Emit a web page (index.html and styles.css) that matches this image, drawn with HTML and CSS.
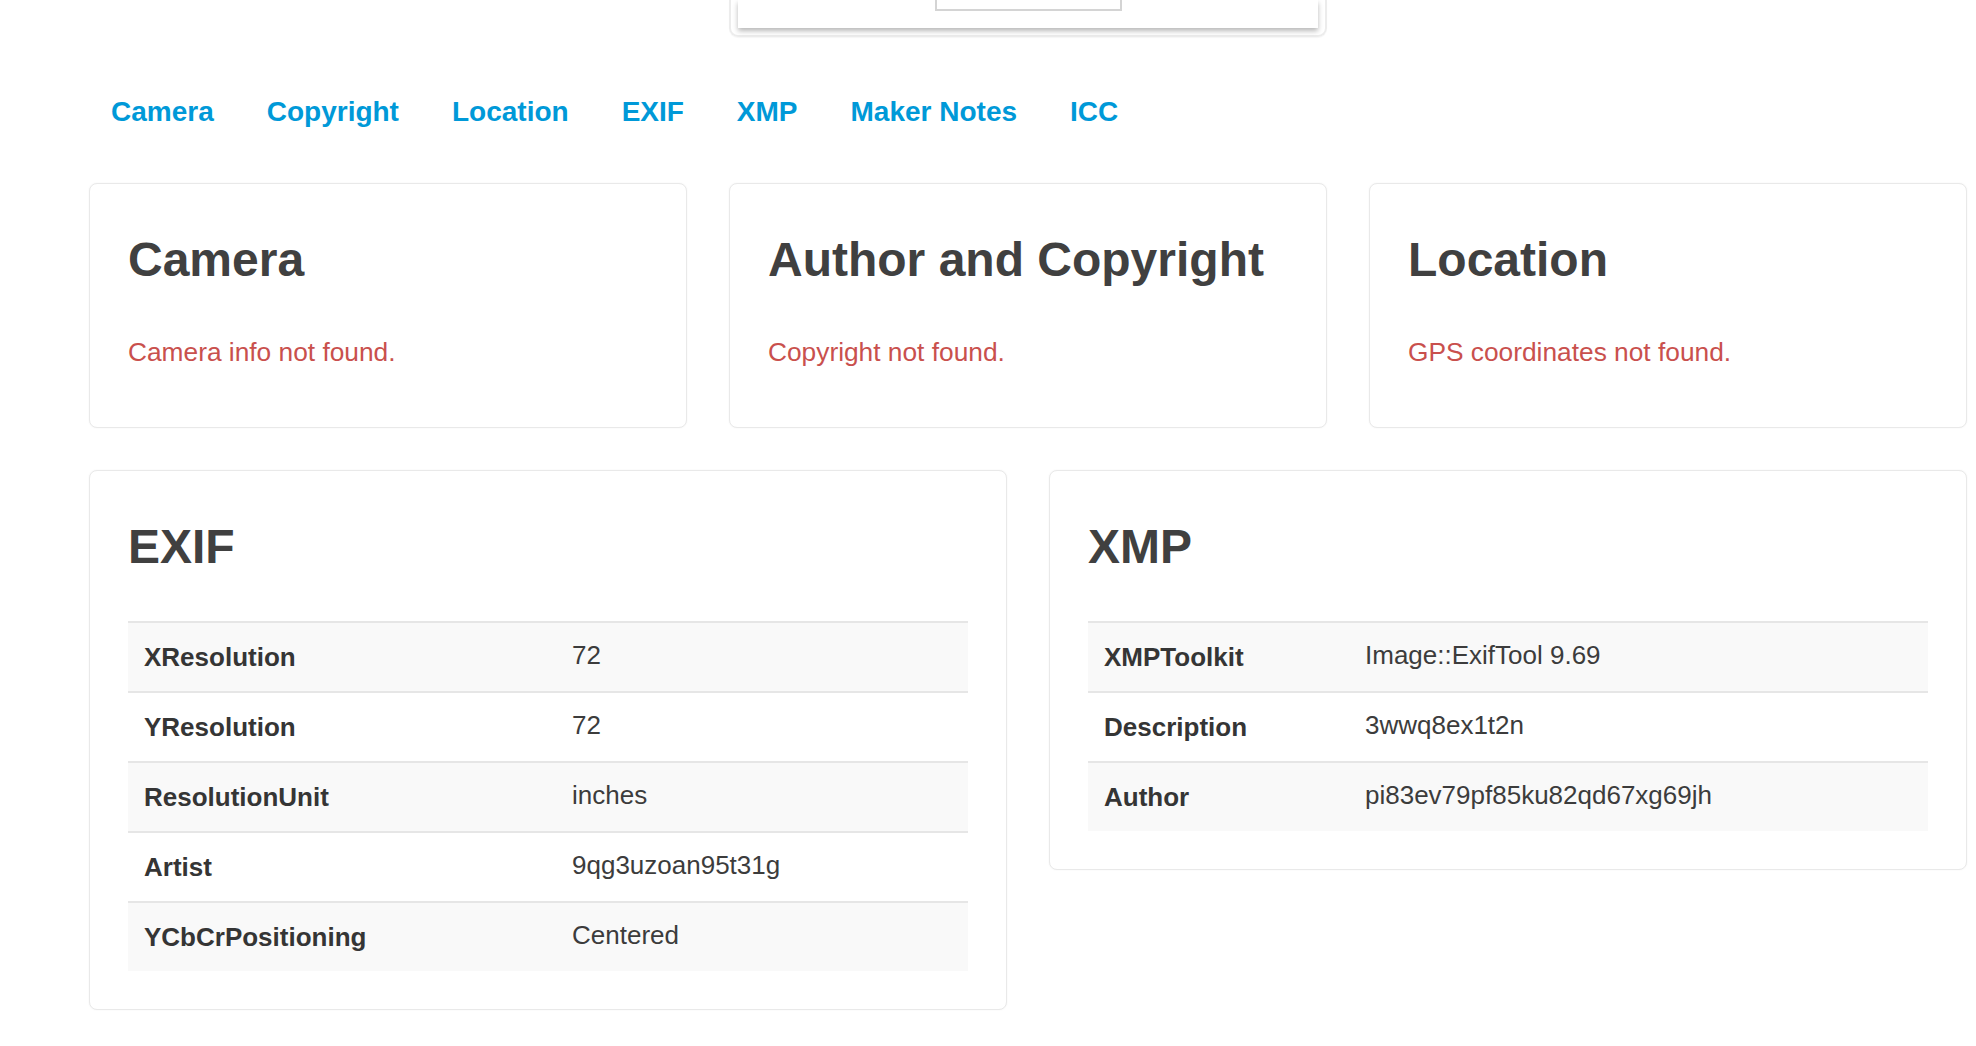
FILE: index.html
```html
<!DOCTYPE html>
<html lang="en">
<head>
<meta charset="utf-8">
<title>Metadata</title>
<link rel="stylesheet" href="styles.css">
</head>
<body>
<div class="page">
  <div class="grid3 preview-row">
    <div class="preview">
      <div class="frame">
        <div class="photo"></div>
      </div>
    </div>
  </div>

  <nav class="tabs">
    <a href="#camera">Camera</a>
    <a href="#copyright">Copyright</a>
    <a href="#location">Location</a>
    <a href="#exif">EXIF</a>
    <a href="#xmp">XMP</a>
    <a href="#makernotes">Maker Notes</a>
    <a href="#icc">ICC</a>
  </nav>

  <div class="grid3 summary">
    <section class="card" id="camera">
      <h2>Camera</h2>
      <p class="missing">Camera info not found.</p>
    </section>
    <section class="card" id="copyright">
      <h2>Author and Copyright</h2>
      <p class="missing">Copyright not found.</p>
    </section>
    <section class="card" id="location">
      <h2>Location</h2>
      <p class="missing">GPS coordinates not found.</p>
    </section>
  </div>

  <div class="grid2 details">
    <section class="card" id="exif">
      <h2>EXIF</h2>
      <table class="kv kv-exif">
        <tr><th>XResolution</th><td>72</td></tr>
        <tr><th>YResolution</th><td>72</td></tr>
        <tr><th>ResolutionUnit</th><td>inches</td></tr>
        <tr><th>Artist</th><td>9qg3uzoan95t31g</td></tr>
        <tr><th>YCbCrPositioning</th><td>Centered</td></tr>
      </table>
    </section>
    <section class="card" id="xmp">
      <h2>XMP</h2>
      <table class="kv kv-xmp">
        <tr><th>XMPToolkit</th><td>Image::ExifTool 9.69</td></tr>
        <tr><th>Description</th><td>3wwq8ex1t2n</td></tr>
        <tr><th>Author</th><td>pi83ev79pf85ku82qd67xg69jh</td></tr>
      </table>
    </section>
  </div>
</div>
</body>
</html>
```

FILE: styles.css
```css
* { box-sizing: border-box; }

html, body {
  margin: 0;
  padding: 0;
  background: #ffffff;
}

body {
  font-family: "Liberation Sans", Helvetica, Arial, sans-serif;
  font-size: 26px;
  line-height: 36px;
  color: #3a3a3a;
}

.page {
  width: 1878px;
  margin-left: 89px;
  padding-bottom: 40px;
}

.grid3 {
  display: grid;
  grid-template-columns: repeat(3, 1fr);
  column-gap: 42px;
}

.grid2 {
  display: grid;
  grid-template-columns: repeat(2, 1fr);
  column-gap: 42px;
  align-items: start;
}

/* top preview frame (scrolled mostly off screen) */
.preview {
  grid-column: 2;
  height: 37px;
  border: 2px solid #ececec;
  border-top: none;
  border-radius: 0 0 9px 9px;
  padding: 0 7px;
  box-shadow: 0 1px 1px rgba(0, 0, 0, 0.04);
}

.frame {
  height: 28px;
  background: #ffffff;
  box-shadow: 0 3px 5px rgba(0, 0, 0, 0.28);
  display: flex;
  justify-content: center;
}

.photo {
  width: 187px;
  height: 11px;
  border: 2px solid #d4d4d4;
  border-top: none;
}

/* nav tabs */
.tabs {
  display: flex;
  gap: 53px;
  margin-top: 55px;
  padding-left: 22px;
}

.tabs a {
  font-size: 28px;
  line-height: 40px;
  font-weight: bold;
  color: #0099d8;
  text-decoration: none;
}

/* cards */
.summary {
  margin-top: 51px;
}

.details {
  margin-top: 42px;
}

.card {
  border: 1px solid #e9e9e9;
  border-radius: 8px;
  box-shadow: 0 0 2px rgba(0, 0, 0, 0.05);
  padding: 38px;
  background: #ffffff;
}

.card h2 {
  margin: 9px 0 45px;
  font-size: 48px;
  line-height: 58px;
  font-weight: bold;
  color: #404040;
}

.missing {
  margin: 0 0 19px;
  font-size: 26.3px;
  color: #c9504d;
}

/* key/value tables */
.kv {
  width: 100%;
  border-collapse: collapse;
  border-spacing: 0;
}

.kv th,
.kv td {
  padding: 16px;
  line-height: 36px;
  text-align: left;
  vertical-align: top;
  border-top: 2px solid #e6e6e6;
}

.kv th {
  font-weight: bold;
  color: #353535;
}

.kv td {
  padding-top: 14px;
  padding-bottom: 18px;
  color: #3c3c3c;
}

.kv tr:nth-child(odd) th,
.kv tr:nth-child(odd) td {
  background: #f9f9f9;
}

.kv-exif th { width: 428px; }
.kv-xmp th { width: 261px; }
```
